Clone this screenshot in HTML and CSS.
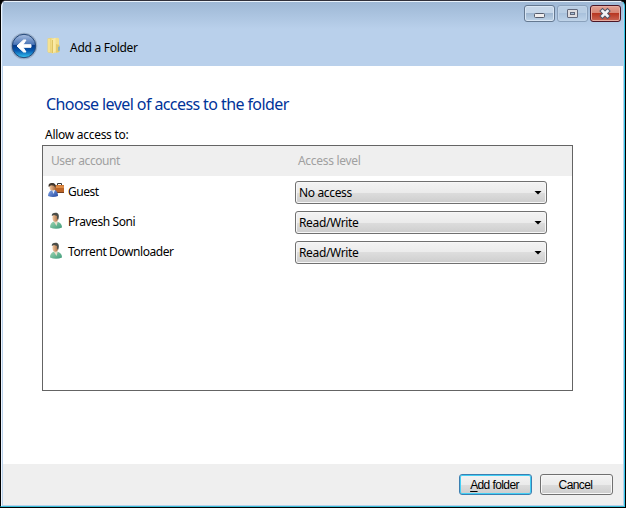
FILE: index.html
```html
<!DOCTYPE html>
<html lang="en">
<head>
<meta charset="utf-8">
<title>Add a Folder</title>
<link rel="stylesheet" href="styles.css">
</head>
<body>
<svg class="defs" width="0" height="0" aria-hidden="true">
  <defs>
    <linearGradient id="skin" x2="1"><stop stop-color="#f2c79e"/><stop offset="1" stop-color="#a66a3f"/></linearGradient>
    <linearGradient id="green" x2="1" y2="1"><stop stop-color="#9ed6b4"/><stop offset="1" stop-color="#3c9a78"/></linearGradient>
    <linearGradient id="blue" x2="1" y2="1"><stop stop-color="#86aaeb"/><stop offset="1" stop-color="#2448a0"/></linearGradient>
    <symbol id="user" viewBox="0 0 16 18">
      <path d="M2 15.500C2 12 3.500 10.500 6 9.500h3c3.500 1 5 3 5 6Q8 18 2 15.500Z" fill="url(#green)"/>
      <path d="M6 8h3.500v2.500L8.500 14 6 10Z" fill="#e9dcc7"/>
      <ellipse cx="7.300" cy="5.800" rx="2.800" ry="3.900" fill="url(#skin)"/>
      <path d="M3.800 4C3.600 1.800 5 .8 7.500.8c3.200 0 4.200 2.700 2.700 7L9 6.500V4L6 3Z" fill="#4a4d48"/>
    </symbol>
  </defs>
</svg>
<div class="window">
  <header class="titlebar">
    <div class="controls">
      <span class="control minimize"><svg width="31" height="17"><rect x="10.500" y="8.500" width="10" height="4" rx="1" fill="#f0eeee" stroke="#555c6c"/></svg></span>
      <span class="control maximize"><svg width="31" height="17"><rect x="10.500" y="4.500" width="10" height="8" rx=".5" fill="#dedcdf" stroke="#62687b"/><rect x="13.500" y="7.500" width="4" height="2" fill="#a6bdd5" stroke="#62687b"/></svg></span>
      <span class="control close"><svg width="31" height="17"><path d="M12.500 6l5 5M17.500 6l-5 5" stroke="#535666" stroke-width="4.600" stroke-linecap="square"/><path d="M12.500 6l5 5M17.500 6l-5 5" stroke="#f3f4f6" stroke-width="2.600" stroke-linecap="square"/></svg></span>
    </div>
    <div class="nav">
      <svg class="back" width="28" height="28" viewBox="0 0 28 28">
        <defs><linearGradient id="orb" x2="0" y2="1"><stop stop-color="#a9bee0"/><stop offset=".43" stop-color="#4b76b7"/><stop offset=".48" stop-color="#063b8b"/><stop offset=".7" stop-color="#075ab0"/><stop offset="1" stop-color="#35c6f3"/></linearGradient></defs>
        <circle cx="14" cy="14" r="13.300" fill="#9aaec8"/>
        <circle cx="14" cy="14" r="11.700" fill="url(#orb)" stroke="#244878"/>
        <path d="M7 14l6.500-6h2.500L13 12.700h8v2.600h-8l3 4.700h-2.500Z" fill="#fff" stroke="#fff" stroke-linejoin="round"/>
      </svg>
      <svg class="folder" width="14" height="18" viewBox="0 0 14 18">
        <path d="M.500 1.500l4-.8 1 1V16l-4-.3-1-1Z" fill="#ecd57b"/>
        <path d="M4 1.500l7-.8 1 1V15l-7 1.500Z" fill="#f3df8c"/>
        <path d="M5 2.500l3.500-1.800V14L5 16.800Z" fill="#faeaa5"/>
        <path d="M1.500 2h1v13h-1Z" fill="#fff0a8"/>
        <path d="M5 3h.800v13H5Z" fill="#d5b953"/>
        <path d="M9 7l3.500 1v7L9 15.800Z" fill="#e6cb6b"/>
        <path d="M11.300 10l1.400-.7v4.200l-1.400.5Z" fill="#69a9d8"/>
      </svg>
      <span class="label nav-title">Add a Folder</span>
    </div>
  </header>
  <main class="content">
    <h1>Choose level of access to the folder</h1>
    <p class="label allow">Allow access to:</p>
    <section class="list">
      <div class="row head"><span class="label account">User account</span><span class="label level">Access level</span></div>
      <div class="row entry">
        <svg class="icon" width="18" height="18" viewBox="0 0 18 18">
          <path d="M10.500 4V2.500h4V4" fill="none" stroke="#343434"/>
          <rect x="7.500" y="4" width="9.500" height="8" fill="#bd6527"/><path d="M8 4.500h9V7H8Z" fill="#de8b45"/><path d="M7.500 11h9.500v1H7.500Z" fill="#75401e"/>
          <path d="M1 15C1 11.500 3 10 5 9h3c2 1 3 3 3 6q-5 2-10 0Z" fill="url(#blue)"/><path d="M5 9h3l-1.500 4Z" fill="#e7edf8"/>
          <ellipse cx="5.500" cy="6" rx="3" ry="3.500" fill="url(#skin)"/><path d="M1.800 6C1 3 2.500 2 5 2c3 0 4.300 1.500 3.500 5L7 4.700 4 4.200Z" fill="#41382f"/>
        </svg>
        <span class="label name guest">Guest</span>
        <div class="select"><span class="label no-access">No access</span><i class="arrow"></i></div>
      </div>
      <div class="row entry">
        <svg class="icon user" width="18" height="18"><use href="#user"/></svg>
        <span class="label name pravesh">Pravesh Soni</span>
        <div class="select"><span class="label read">Read/Write</span><i class="arrow"></i></div>
      </div>
      <div class="row entry">
        <svg class="icon user" width="18" height="18"><use href="#user"/></svg>
        <span class="label name torrent">Torrent Downloader</span>
        <div class="select"><span class="label read">Read/Write</span><i class="arrow"></i></div>
      </div>
    </section>
  </main>
  <footer class="footer">
    <button class="button primary"><span><u>A</u>dd folder</span></button>
    <button class="button"><span>Cancel</span></button>
  </footer>
</div>
</body>
</html>
```

FILE: styles.css
```css
* { box-sizing: border-box; }
body { margin: 0; background: #000; font: 12px "Noto Sans", "Open Sans", sans-serif; color: #000; overflow: hidden; }
.defs { position: absolute; }
.window { width: 625px; height: 507px; border: 1px solid #30303a; border-bottom-color: #36bdd8; border-right-color: #35c7e8; border-left-color: #000; border-radius: 6px 6px 0 0; background: #b9d1ea; overflow: hidden; display: flex; flex-direction: column; box-shadow: inset 1px 1px #edf5ff; padding: 0 1px 1px 2px; }
.titlebar { height: 65px; flex: none; background: linear-gradient(#9eb8d5, #b9d0eb 27px); border-top: 1px solid #e9f2fb; }
.controls { height: 27px; padding: 3px 2px 0 0; display: flex; justify-content: flex-end; gap: 2px; }
.control { width: 31px; height: 17px; border: 1px solid #647890; border-radius: 3px; background: linear-gradient(#c6d7e9 0 45%, #9fb7d1 50%, #bfd4e8); box-shadow: inset 0 0 0 1px #d9e6f4; }
.control svg { display: block; margin: -1px; }
.maximize { border-color: #8aa1bc; background: linear-gradient(#b8cde3 0 45%, #a9c1dc 50%, #bed3e9); box-shadow: inset 0 0 0 1px #bfd3e8; }
.close { border-color: #4b1626; background: linear-gradient(#e2a092, #d78675 45%, #b83722 50%, #ca6654); box-shadow: inset 0 0 0 1px #e6ab9f; }
.nav { display: flex; align-items: center; height: 34px; padding-left: 7px; }
.folder { margin-left: 9px; }
.label { font-size: 12px; line-height: 16px; white-space: nowrap; }
.nav-title { margin-left: 9px; padding-top: 3px; letter-spacing: -.28px; }
.content { height: 398px; background: #fff; padding: 27px 50px 0 39px; }
h1 { margin: 0 0 0 4px; font-size: 16px; line-height: 22px; font-weight: 400; color: #039; letter-spacing: -.59px; white-space: nowrap; }
.allow { margin: 12px 0 2px 3px; letter-spacing: -.28px; }
.list { width: 531px; height: 246px; border: 1px solid #646464; }
.row { display: flex; align-items: center; height: 30px; }
.head { background: #efefef; color: #a0a0a0; padding-left: 8px; }
.account { width: 247px; letter-spacing: -.42px; }
.level { letter-spacing: -.3px; }
.entry { padding: 2px 0 0 4px; }
.icon { width: 18px; margin-top: -5px; flex: none; }
.user { margin-top: -3px; }
.name { width: 226px; margin-left: 3px; letter-spacing: -.42px; }
.guest { letter-spacing: -.5px; }
.select { width: 252px; height: 23px; margin-top: 1px; margin-left: 1px; padding: 0 4px 0 3px; border: 1px solid #707070; border-radius: 3px; display: flex; align-items: center; justify-content: space-between; background: linear-gradient(#f3f3f3, #ebebeb 50%, #dddddd 50%, #cdcdcd); box-shadow: inset 0 0 0 1px #f7f7f7; letter-spacing: -.35px; }
.arrow { width: 8px; height: 4px; background: #000; clip-path: polygon(0 0, 100% 0, 50% 100%); }
.footer { height: 41px; background: #efefef; display: flex; justify-content: flex-end; padding: 10px 10px 0 0; gap: 8px; }
.button { width: 73px; height: 21px; padding: 0 2px 0 0; border: 1px solid #707070; border-radius: 3px; background: linear-gradient(#f3f3f3, #ebebeb 50%, #dddddd 50%, #cdcdcd); box-shadow: inset 0 0 0 1px #f7f7f7; font: 12px "Liberation Sans", sans-serif; letter-spacing: -.6px; color: #000; }
.primary { border-color: #3c7fb1; box-shadow: inset 0 0 0 1px #43cff5; }
.button u { text-underline-offset: 2px; }
```
